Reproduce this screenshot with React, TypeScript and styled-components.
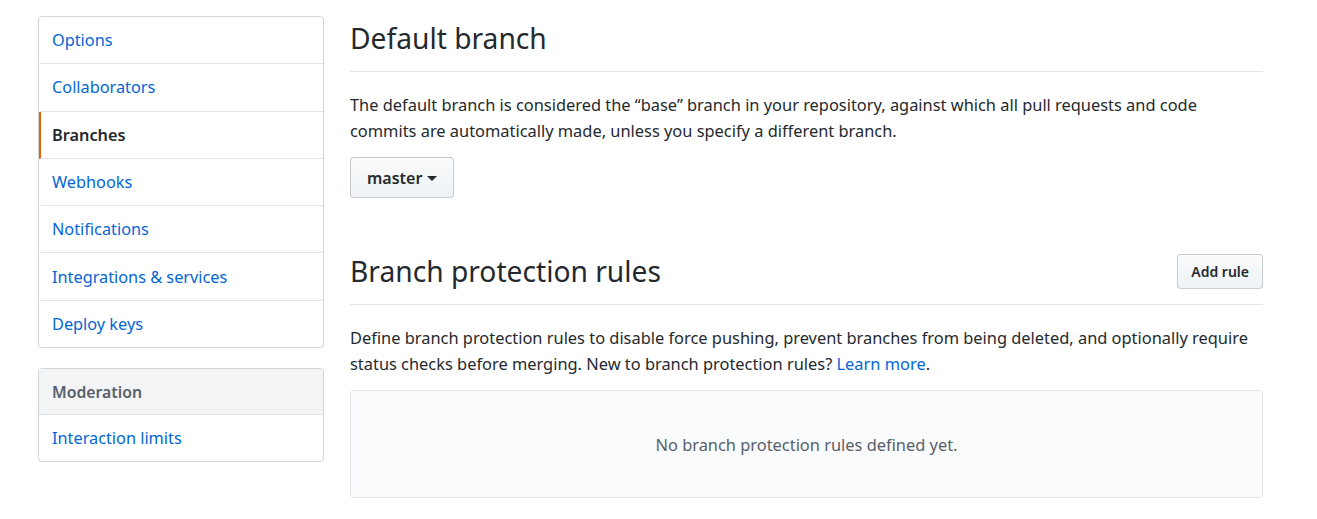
import styled, { createGlobalStyle } from 'styled-components';

const GlobalStyle = createGlobalStyle`
  body {
    margin: 0;
    background: #fff;
    font-family: "Noto Sans", "Open Sans", sans-serif;
    color: #24292e;
  }
`;

const Page = styled.div`
  display: flex;
  gap: 26px;
  padding: 16px 0 0 38px;
`;

const Sidebar = styled.div`
  width: 286px;
  flex-shrink: 0;
  display: flex;
  flex-direction: column;
  gap: 20px;
`;

const MenuBox = styled.nav`
  border: 1px solid #d1d5da;
  border-radius: 4px;
  overflow: hidden;
`;

const MenuHeading = styled.div`
  padding: 0 13px;
  height: 45px;
  display: flex;
  align-items: center;
  background: #f3f4f6;
  border-bottom: 1px solid #e1e4e8;
  font-size: 15.8px;
  font-weight: 600;
  color: #586069;
`;

const MenuItem = styled.a<{ $selected?: boolean }>`
  display: flex;
  align-items: center;
  height: 46.3px;
  border-bottom: 1px solid #e1e4e8;
  border-left: 2px solid ${(p) => (p.$selected ? '#e36209' : 'transparent')};
  padding: 0 13px 0 11px;
  font-size: 16.3px;
  color: ${(p) => (p.$selected ? '#24292e' : '#0366d6')};
  font-weight: ${(p) => (p.$selected ? 600 : 400)};
  text-decoration: none;
  &:last-child {
    border-bottom: none;
  }
`;

const Main = styled.main`
  width: 913px;
`;

const Subhead = styled.div<{ $spacious?: boolean }>`
  display: flex;
  align-items: center;
  justify-content: space-between;
  margin-top: ${(p) => (p.$spacious ? '54px' : '3px')};
  padding-bottom: 14px;
  border-bottom: 1px solid #e1e4e8;
`;

const Heading = styled.h2`
  margin: 0;
  font-size: 28.2px;
  line-height: 38px;
  font-weight: 400;
  color: #24292e;
`;

const Text = styled.p`
  margin: 20px 0 0;
  font-size: 16.4px;
  line-height: 26px;
  color: #24292e;
`;

const Link = styled.a`
  color: #0366d6;
  text-decoration: none;
`;

const Button = styled.button<{ $size?: 'sm' }>`
  display: inline-flex;
  align-items: center;
  gap: 5px;
  height: ${(p) => (p.$size === 'sm' ? '35px' : '41px')};
  padding: ${(p) => (p.$size === 'sm' ? '0 13px' : '0 16px')};
  font-family: inherit;
  font-size: ${(p) => (p.$size === 'sm' ? '14px' : '16px')};
  font-weight: 600;
  color: #24292e;
  background: linear-gradient(-180deg, #fafbfc 0%, #eff3f6 90%);
  border: 1px solid rgba(27, 31, 35, 0.2);
  border-radius: 4px;
`;

const Caret = styled.span`
  width: 0;
  height: 0;
  border-left: 5px solid transparent;
  border-right: 5px solid transparent;
  border-top: 5px solid #24292e;
  margin-top: 2px;
`;

const BranchButton = styled(Button)`
  margin-top: 13px;
`;

const Blankslate = styled.div`
  margin-top: 13px;
  height: 106px;
  display: flex;
  align-items: center;
  justify-content: center;
  background: #fafbfc;
  border: 1px solid #e1e4e8;
  border-radius: 4px;
  font-size: 16.4px;
  color: #586069;
`;

const menu = [
  'Options',
  'Collaborators',
  'Branches',
  'Webhooks',
  'Notifications',
  'Integrations & services',
  'Deploy keys',
];

const App = () => {
  return (
    <>
      <GlobalStyle />
      <Page>
        <Sidebar>
          <MenuBox>
            {menu.map((m) => (
              <MenuItem key={m} $selected={m === 'Branches'}>
                {m}
              </MenuItem>
            ))}
          </MenuBox>
          <MenuBox>
            <MenuHeading>Moderation</MenuHeading>
            <MenuItem>Interaction limits</MenuItem>
          </MenuBox>
        </Sidebar>
        <Main>
          <Subhead>
            <Heading>Default branch</Heading>
          </Subhead>
          <Text>
            The default branch is considered the “base” branch in your repository, against which all
            pull requests and code commits are automatically made, unless you specify a different
            branch.
          </Text>
          <BranchButton type='button'>
            master <Caret />
          </BranchButton>

          <Subhead $spacious>
            <Heading>Branch protection rules</Heading>
            <Button type='button' $size='sm'>Add rule</Button>
          </Subhead>
          <Text>
            Define branch protection rules to disable force pushing, prevent branches from being
            deleted, and optionally require status checks before merging. New to branch protection
            rules? <Link>Learn more</Link>.
          </Text>
          <Blankslate>No branch protection rules defined yet.</Blankslate>
        </Main>
      </Page>
    </>
  );
};

export default App;
